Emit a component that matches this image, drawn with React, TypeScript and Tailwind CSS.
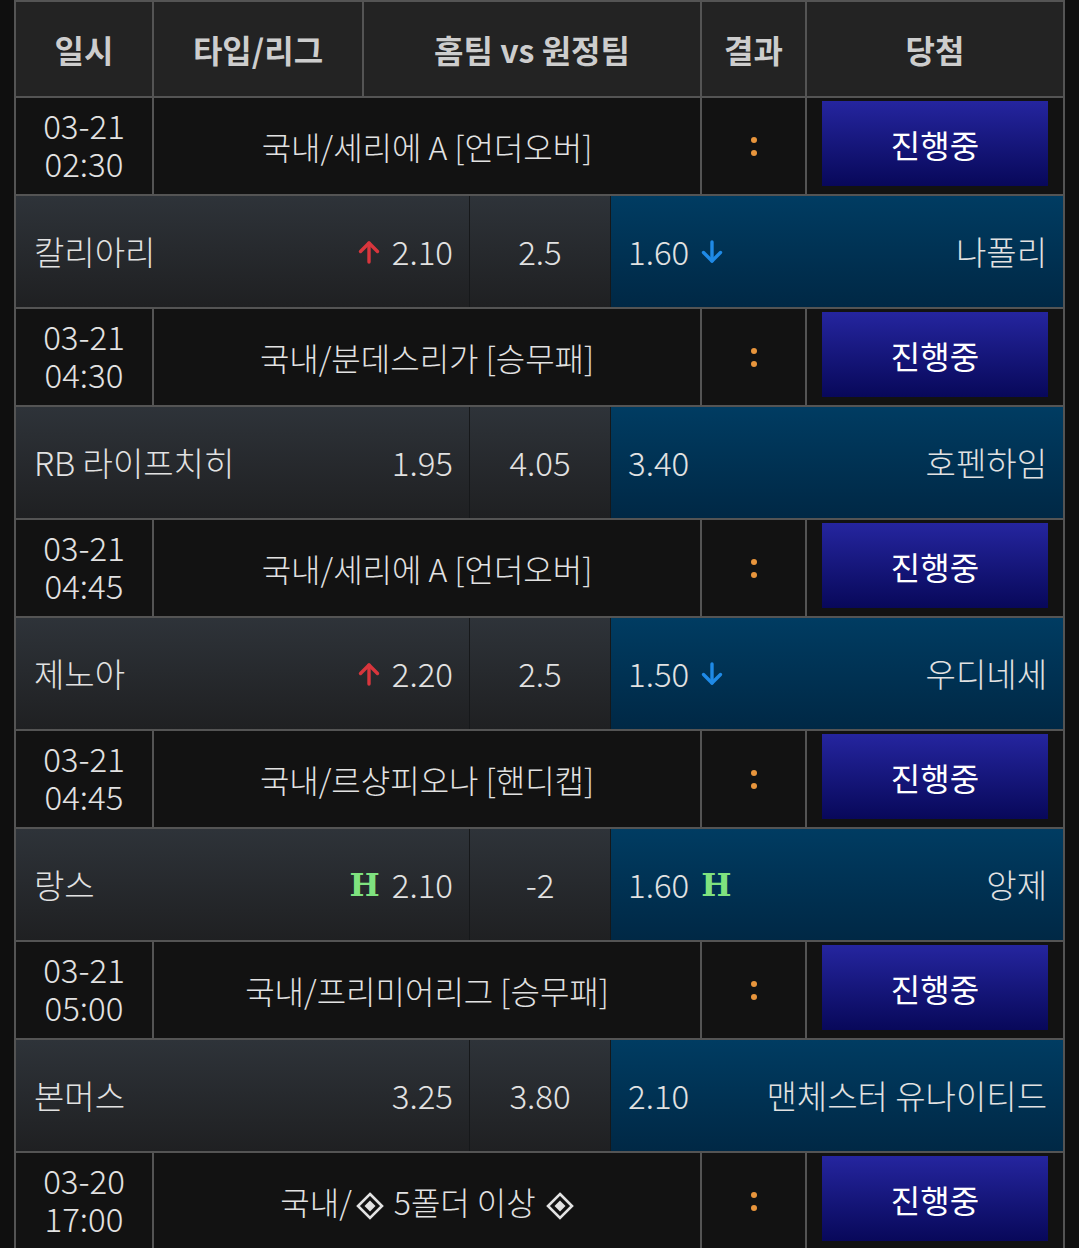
interface Game {
  date: string;
  time: string;
  league: React.ReactNode;
  home: string;
  away: string;
  homeOdds?: string;
  draw?: string;
  awayOdds?: string;
  homeMark?: Mark;
  awayMark?: Mark;
}

type Mark = "up" | "down" | "h" | null;

// ◈ drawn as svg so it comes out at the reference size
const Diamond = () => (
  <svg width="28" height="28" viewBox="0 0 28 28" className="inline-block" aria-label="◈">
    <path d="M14 2L26 14 14 26 2 14Z" fill="none" stroke="#e2e2e2" strokeWidth="2.6" strokeLinejoin="miter" />
    <path d="M14 8.5L19.5 14 14 19.5 8.5 14Z" fill="#e2e2e2" />
  </svg>
);

const games: Game[] = [
  {
    date: "03-21",
    time: "02:30",
    league: "국내/세리에 A [언더오버]",
    home: "칼리아리",
    homeOdds: "2.10",
    homeMark: "up",
    draw: "2.5",
    awayOdds: "1.60",
    awayMark: "down",
    away: "나폴리",
  },
  {
    date: "03-21",
    time: "04:30",
    league: "국내/분데스리가 [승무패]",
    home: "RB 라이프치히",
    homeOdds: "1.95",
    draw: "4.05",
    awayOdds: "3.40",
    away: "호펜하임",
  },
  {
    date: "03-21",
    time: "04:45",
    league: "국내/세리에 A [언더오버]",
    home: "제노아",
    homeOdds: "2.20",
    homeMark: "up",
    draw: "2.5",
    awayOdds: "1.50",
    awayMark: "down",
    away: "우디네세",
  },
  {
    date: "03-21",
    time: "04:45",
    league: "국내/르샹피오나 [핸디캡]",
    home: "랑스",
    homeOdds: "2.10",
    homeMark: "h",
    draw: "-2",
    awayOdds: "1.60",
    awayMark: "h",
    away: "앙제",
  },
  {
    date: "03-21",
    time: "05:00",
    league: "국내/프리미어리그 [승무패]",
    home: "본머스",
    homeOdds: "3.25",
    draw: "3.80",
    awayOdds: "2.10",
    away: "맨체스터 유나이티드",
  },
  {
    date: "03-20",
    time: "17:00",
    league: (
      <span className="flex items-center">
        <span>국내/</span>
        <span className="ml-[4px] mr-[10px]">
          <Diamond />
        </span>
        <span>5폴더 이상</span>
        <span className="ml-[10px]">
          <Diamond />
        </span>
      </span>
    ),
    home: "",
    away: "",
  },
];

const font = {
  fontFamily: '"Noto Sans CJK KR", "Noto Sans", sans-serif',
};

function MarkIcon({ mark }: { mark?: Mark }) {
  if (mark === "up" || mark === "down") {
    const color = mark === "up" ? "#d8363d" : "#1f8ae6";
    return (
      <svg
        width="22"
        height="24"
        viewBox="0 0 22 24"
        fill="none"
        stroke={color}
        strokeWidth="3.4"
        strokeLinecap="round"
        strokeLinejoin="round"
        className={mark === "down" ? "rotate-180" : ""}
      >
        <path d="M11 22V3" />
        <path d="M2.5 11.5L11 3l8.5 8.5" />
      </svg>
    );
  }
  if (mark === "h") {
    return (
      <span className="font-['DejaVu_Serif',serif] text-[32px] font-bold leading-none text-[#7fe27f]">
        H
      </span>
    );
  }
  return null;
}

function InfoRow({ game }: { game: Game }) {
  return (
    <div className="grid h-[98px] grid-cols-[138px_548px_105px_1fr] border-b-2 border-[#545454] bg-[#121212] text-[#e2e2e2] font-light">
      <div className="flex flex-col items-center justify-center border-r-2 border-[#545454] pb-[4px] text-[33px] leading-[38px]">
        <span>{game.date}</span>
        <span>{game.time}</span>
      </div>
      <div className="flex items-center justify-center border-r-2 border-[#545454] text-[32px]">
        {game.league}
      </div>
      <div className="flex flex-col items-center justify-center gap-[7px] border-r-2 border-[#545454]">
        <span className="h-[6px] w-[6px] rounded-full bg-[#e8953c]" />
        <span className="h-[6px] w-[6px] rounded-full bg-[#e8953c]" />
      </div>
      <div className="flex items-start px-[15px] pt-[3px]">
        <div className="flex h-[85px] w-full items-center justify-center bg-gradient-to-b from-[#25259f] to-[#08085a] text-[32px] font-normal text-white">
          진행중
        </div>
      </div>
    </div>
  );
}

function OddsRow({ game }: { game: Game }) {
  return (
    <div className="grid h-[113px] grid-cols-[454px_141px_1fr] border-b-2 border-[#545454] text-[33px] font-light text-[#e2e2e2]">
      <div className="flex items-center justify-between border-r border-[#16181a] bg-gradient-to-b from-[#2e3339] to-[#1f2022] pl-[18px] pr-[16px]">
        <span>{game.home}</span>
        <span className="flex items-center gap-[12px]">
          <MarkIcon mark={game.homeMark} />
          <span>{game.homeOdds}</span>
        </span>
      </div>
      <div className="flex items-center justify-center border-r border-[#16181a] bg-gradient-to-b from-[#2e3339] to-[#1f2022]">
        {game.draw}
      </div>
      <div className="flex items-center justify-between bg-gradient-to-b from-[#003c62] to-[#002845] pl-[17px] pr-[16px]">
        <span className="flex items-center gap-[12px]">
          <span>{game.awayOdds}</span>
          <MarkIcon mark={game.awayMark} />
        </span>
        <span>{game.away}</span>
      </div>
    </div>
  );
}

export default function App() {
  return (
    <div className="min-h-screen bg-[#0f0f0f] pl-[14px] pr-[14px]" style={font}>
      <div className="border-x-2 border-t-2 border-[#545454]">
        {/* Header */}
        <div className="grid h-[96px] grid-cols-[138px_210px_338px_105px_1fr] border-b-2 border-[#545454] bg-[#232323] text-[32px] font-bold text-[#cdcdcd]">
          <div className="flex items-center justify-center border-r-2 border-[#545454]">일시</div>
          <div className="flex items-center justify-center border-r-2 border-[#545454]">타입/리그</div>
          <div className="flex items-center justify-center border-r-2 border-[#545454]">홈팀 vs 원정팀</div>
          <div className="flex items-center justify-center border-r-2 border-[#545454]">결과</div>
          <div className="flex items-center justify-center">당첨</div>
        </div>

        {games.map((g, i) => (
          <div key={i}>
            <InfoRow game={g} />
            {g.homeOdds && <OddsRow game={g} />}
          </div>
        ))}
      </div>
    </div>
  );
}
